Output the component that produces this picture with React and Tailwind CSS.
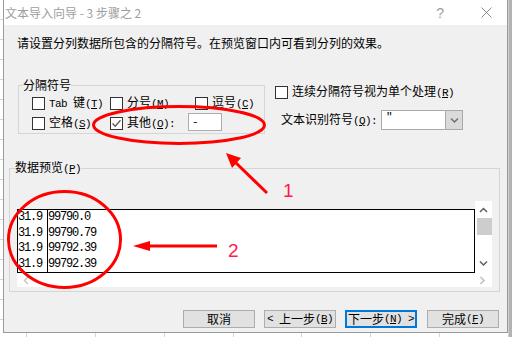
import React from 'react';

const mono = "font-['Liberation_Mono',monospace] text-[11px] tracking-[-0.6px]";
const cell = "font-['Liberation_Mono',monospace] text-[12px] tracking-[-1.2px] h-[15.5px] leading-[15.5px]";

const Key = ({ k, colon }) => (
    <span className={mono}>
        (<u className="underline-offset-[1px]">{k}</u>){colon ? ':' : ''}
    </span>
);

const Box = ({ checked }) => (
    <span className="w-[13px] h-[13px] shrink-0 border border-[#333] bg-white flex items-center justify-center">
        {checked && (
            <svg width="11" height="11" viewBox="0 0 11 11">
                <path d="M1.5 5.5 L4.2 8.3 L9.5 2.3" fill="none" stroke="#5a5a5a" strokeWidth="1.3" />
            </svg>
        )}
    </span>
);

const Option = ({ label, k, checked, className = '', colon }) => (
    <label className={`flex items-center gap-[4px] ${className}`}>
        <Box checked={checked} />
        <span className="whitespace-nowrap">
            {label}
            <Key k={k} colon={colon} />
        </span>
    </label>
);

const Chevron = ({ dir, color = '#606060' }) => {
    const d = {
        up: 'M1 5 L4.5 1.5 L8 5',
        down: 'M1 1.5 L4.5 5 L8 1.5',
        left: 'M5 1 L1.5 4.5 L5 8',
        right: 'M1.5 1 L5 4.5 L1.5 8',
    }[dir];
    const vertical = dir === 'up' || dir === 'down';
    return (
        <svg width={vertical ? 9 : 7} height={vertical ? 7 : 9} viewBox={vertical ? '0 0 9 7' : '0 0 7 9'}>
            <path d={d} fill="none" stroke={color} strokeWidth="1.5" />
        </svg>
    );
};

const Button = ({ children, primary, className = '' }) => (
    <button
        className={`w-[72px] h-[18px] flex items-center justify-center bg-[#e1e1e1] leading-none whitespace-pre ${
            primary ? 'border-2 border-[#0078d7]' : 'border border-[#adadad]'
        } ${className}`}
    >
        {children}
    </button>
);

const rows = [
    ['31.9', '99790.0'],
    ['31.9', '99790.79'],
    ['31.9', '99792.39'],
    ['31.9', '99792.39'],
];

export default function App() {
    return (
        <div className="w-[512px] h-[337px] relative overflow-hidden flex bg-white text-black text-[12px] font-['Noto_Sans_CJK_SC',sans-serif]">
            {/* sheet behind the dialog */}
            <div className="w-[3px] h-full bg-[repeating-linear-gradient(180deg,#fff_0_19px,#d4d4d4_19px_20px)]" />

            <div className="w-[505px] flex flex-col">
                <div className="h-[333px] flex flex-col border-x border-b border-[#9a9a9a]">
                    {/* title bar */}
                    <div className="h-[25px] bg-white flex items-center pl-[1px] text-[#9e9e9e]">
                        <span className="leading-none whitespace-pre">文本导入向导 - 3 步骤之 2</span>
                        <span className="ml-auto mr-[37px] text-[14px] leading-none font-['Liberation_Sans',sans-serif]">?</span>
                        <svg width="11" height="11" viewBox="0 0 11 11" className="mr-[15px]">
                            <path d="M0.5 0.5 L10.5 10.5 M10.5 0.5 L0.5 10.5" stroke="#8a8a8a" strokeWidth="1" />
                        </svg>
                    </div>

                    {/* body */}
                    <div className="flex-1 bg-[#f0f0f0] flex flex-col">
                        <p className="mt-[10px] pl-[13px] leading-[16px]">
                            请设置分列数据所包含的分隔符号。在预览窗口内可看到分列的效果。
                        </p>

                        <div className="mt-[26px] flex">
                            <fieldset className="ml-[14px] w-[247px] h-[57px] border border-[#d5d5d5] pl-[4px]">
                                <legend className="leading-[16px] px-0">分隔符号</legend>
                                <div className="pl-[9px] pt-[2px] flex h-[18px] items-center">
                                    <Option className="w-[78px]" label={<span><span className={`${mono} whitespace-pre`}>Tab </span>键</span>} k="T" />
                                    <Option className="w-[85px]" label="分号" k="M" />
                                    <Option label="逗号" k="C" />
                                </div>
                                <div className="pl-[9px] mt-[3px] flex h-[18px] items-center">
                                    <Option className="w-[78px]" label="空格" k="S" />
                                    <Option className="w-[78px]" label="其他" k="O" colon checked />
                                    <div className="w-[34px] h-[18px] -mt-[2px] border border-[#adadad] bg-white flex items-center pl-[3px]">
                                        <span className={mono}>-</span>
                                    </div>
                                </div>
                            </fieldset>

                            <div className="ml-[10px] flex flex-col">
                                <div className="mt-[7px] h-[16px] flex items-center">
                                    <Option label="连续分隔符号视为单个处理" k="R" />
                                </div>
                                <div className="mt-[10px] h-[20px] flex items-center pl-[6px]">
                                    <span className="w-[100px] whitespace-nowrap">
                                        文本识别符号<Key k="Q" colon />
                                    </span>
                                    <div className="w-[82px] h-[20px] border border-[#a9a9a9] bg-white flex">
                                        <span className={`flex-1 pl-[4px] leading-[12px] ${mono}`}>"</span>
                                        <span className="w-[17px] bg-[#dadada] border-l border-[#a9a9a9] flex items-center justify-center">
                                            <Chevron dir="down" color="#707070" />
                                        </span>
                                    </div>
                                </div>
                            </div>
                        </div>

                        {/* preview */}
                        <fieldset className="mt-[25px] ml-[5px] w-[491px] h-[133px] border border-[#d5d5d5] pl-[5px]">
                            <legend className="leading-[16px] px-0">
                                数据预览<Key k="P" />
                            </legend>
                            <div className="mt-[24px] ml-[2px] flex flex-col w-[475px]">
                                <div className="flex">
                                    <div className="w-[458px] flex flex-col">
                                        <div className="h-[8px]" />
                                        <div className="h-[64px] border border-black bg-white flex">
                                            <div className="w-[30px] border-r border-black">
                                                {rows.map((r, i) => (
                                                    <div key={i} className={cell}>{r[0]}</div>
                                                ))}
                                            </div>
                                            <div>
                                                {rows.map((r, i) => (
                                                    <div key={i} className={cell}>{r[1]}</div>
                                                ))}
                                            </div>
                                        </div>
                                    </div>
                                    <div className="w-[17px] h-[72px] bg-white flex flex-col items-center">
                                        <div className="mt-[6px]"><Chevron dir="up" /></div>
                                        <div className="mt-[4px] ml-[2px] w-[15px] h-[17px] bg-[#cdcdcd]" />
                                        <div className="mt-[25px]"><Chevron dir="down" /></div>
                                    </div>
                                </div>
                                <div className="h-[14px] bg-white flex items-center">
                                    <div className="ml-[6px]"><Chevron dir="left" color="#c6c6c6" /></div>
                                    <div className="ml-auto mr-[6px]"><Chevron dir="right" color="#bdbdbd" /></div>
                                </div>
                            </div>
                        </fieldset>

                        <div className="mt-[18px] flex justify-end gap-[9px] pr-[8px]">
                            <Button>取消</Button>
                            <Button>
                                <span className={mono}>{'< '}</span>上一步<Key k="B" />
                            </Button>
                            <Button primary>
                                下一步<Key k="N" /><span className={mono}>{' >'}</span>
                            </Button>
                            <Button className="ml-[1px]">
                                完成<Key k="F" />
                            </Button>
                        </div>
                    </div>
                </div>

                {/* sheet below */}
                <div className="h-[4px] flex">
                    <div className="w-[24px]" />
                    {[0, 1, 2, 3, 4, 5, 6].map((i) => (
                        <div key={i} className="w-[72px] border-l border-[#d4d4d4]" />
                    ))}
                </div>
            </div>

            <div className="w-[4px] h-full bg-[#b3b3b3] border-l border-[#d0d0d0]" />

            {/* red annotations */}
            <svg className="absolute inset-0 pointer-events-none" width="512" height="337" viewBox="0 0 512 337">
                <ellipse cx="179" cy="125" rx="85.5" ry="18.5" fill="none" stroke="#ff0000" strokeWidth="3" />
                <ellipse cx="64.5" cy="239.5" rx="56" ry="48" fill="none" stroke="#ff0000" strokeWidth="3" />
                <line x1="267" y1="193" x2="234" y2="161" stroke="#ff0000" strokeWidth="3" />
                <polygon points="226,153 241,158 232,168" fill="#ff0000" />
                <line x1="217" y1="246" x2="145" y2="246" stroke="#ff0000" strokeWidth="3" />
                <polygon points="133,246 150,241 150,251" fill="#ff0000" />
                <text x="283" y="197" fontSize="19" fill="#ff1a4a" fontFamily="Liberation Sans, sans-serif">1</text>
                <text x="228" y="257" fontSize="19" fill="#ff1a4a" fontFamily="Liberation Sans, sans-serif">2</text>
            </svg>
        </div>
    );
}
